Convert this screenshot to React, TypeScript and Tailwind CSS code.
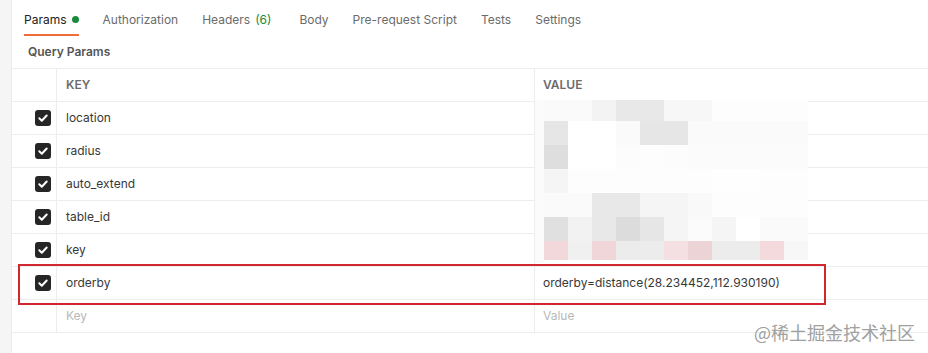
import React from "react";

interface Param {
    key: string;
    value: string;
}

const tabs = ["Params", "Authorization", "Headers", "Body", "Pre-request Script", "Tests", "Settings"];

const params: Param[] = [
    { key: "location", value: "" },
    { key: "radius", value: "" },
    { key: "auto_extend", value: "" },
    { key: "table_id", value: "" },
    { key: "key", value: "" },
    { key: "orderby", value: "orderby=distance(28.234452,112.930190)" },
];

// pixelated (blurred out) values, 11 columns x 7 rows
const mosaic: string[][] = [
    ["#fafafa", "#fafafa", "#f3f3f3", "#e8e8e8", "#e8e8e8", "#f7f7f7", "#f7f7f7", "#fdfdfd", "#fdfdfd", "#fdfdfd", "#fdfdfd"],
    ["#e6e6e6", "#ffffff", "#ffffff", "#fafafa", "#e6e6e6", "#e6e6e6", "#fafafa", "#fafafa", "#fafafa", "#fafafa", "#fafafa"],
    ["#dedede", "#ffffff", "#ffffff", "#fcfcfc", "#fdfdfd", "#fcfcfc", "#fbfbfb", "#fbfbfb", "#fbfbfb", "#fbfbfb", "#fbfbfb"],
    ["#f5f5f5", "#fdfdfd", "#fdfdfd", "#fdfdfd", "#fdfdfd", "#fdfdfd", "#fdfdfd", "#fefefe", "#fefefe", "#fdfdfd", "#fdfdfd"],
    ["#fafafa", "#fafafa", "#e8e8e8", "#e8e8e8", "#f5f5f5", "#f5f5f5", "#f9f9f9", "#fdfdfd", "#fdfdfd", "#fdfdfd", "#fdfdfd"],
    ["#e0e0e0", "#f2f2f2", "#e8e8e8", "#dcdcdc", "#e6e6e6", "#f5f5f5", "#fbfbfb", "#f5f5f5", "#ffffff", "#fafafa", "#fafafa"],
    ["#f2d8da", "#f0f0f0", "#f0d6d8", "#ececec", "#ececec", "#f4e0e2", "#ecd4d6", "#ececec", "#ececec", "#f4dadc", "#f7f7f7"],
];
const mosaicRows = ["h-[21px]", "h-[24px]", "h-[24px]", "h-[24px]", "h-[24px]", "h-[24px]", "h-[19px]"];

const CheckBox: React.FC = () => (
    <div className="w-[16px] h-[16px] rounded-[3px] bg-[#262626] flex items-center justify-center">
        <svg width="12" height="12" viewBox="0 0 12 12" fill="none">
            <path d="M2.3 6.3l2.5 2.4 4.9-5.2" stroke="#ffffff" strokeWidth="2" strokeLinecap="round" strokeLinejoin="round" />
        </svg>
    </div>
);

const App: React.FC = () => {
    return (
        <div
            className="w-[928px] h-[353px] flex bg-white overflow-hidden text-[12px] text-[#383838]"
            style={{ fontFamily: "Inter, 'Noto Sans', sans-serif" }}
        >
            <div className="w-[12px] shrink-0 bg-[#f5f5f5] border-r border-[#ebebeb]" />

            <div className="flex-1 relative">
                {/* tabs */}
                <div className="h-[36px] flex">
                    {tabs.map((tab, i) => (
                        <div
                            key={tab}
                            className={
                                "mx-3 pt-[5px] flex items-center gap-[5px] border-b-2 " +
                                (i === 0 ? "border-[#f06d3c] text-[#212121]" : "border-transparent text-[#6b6b6b]") +
                                (tab === "Headers" ? " mr-[16px]" : "")
                            }
                        >
                            <span>{tab}</span>
                            {tab === "Params" && <span className="w-[7px] h-[7px] rounded-full bg-[#178a3b]" />}
                            {tab === "Headers" && <span className="text-[#178a3b]">(6)</span>}
                        </div>
                    ))}
                </div>

                <div className="h-[32px] flex items-center pl-4 font-semibold text-[#555555]">Query Params</div>

                {/* table */}
                <div className="border-t border-[#ededed]">
                    <div className="h-[33px] grid grid-cols-[45px_478px_1fr] border-b border-[#ededed] font-semibold text-[#6b6b6b]">
                        <div className="border-r border-[#ededed]" />
                        <div className="border-r border-[#ededed] flex items-center pl-[9px]">KEY</div>
                        <div className="flex items-center pl-[8px]">VALUE</div>
                    </div>
                    {params.map(p => (
                        <div key={p.key} className="h-[33px] grid grid-cols-[45px_478px_1fr] border-b border-[#ededed]">
                            <div className="border-r border-[#ededed] flex items-center pl-[23px]">
                                <CheckBox />
                            </div>
                            <div className="border-r border-[#ededed] flex items-center pl-[9px]">{p.key}</div>
                            <div className="flex items-center pl-[8px]">{p.value}</div>
                        </div>
                    ))}
                    <div className="h-[33px] grid grid-cols-[45px_478px_1fr] border-b border-[#ededed] text-[#b8b8b8]">
                        <div className="border-r border-[#ededed]" />
                        <div className="border-r border-[#ededed] flex items-center pl-[9px]">Key</div>
                        <div className="flex items-center pl-[8px]">Value</div>
                    </div>
                </div>

                {/* pixelated values */}
                <div className="absolute left-[523px] top-[100px] w-[273px] pl-[9px] bg-[#fbfbfb]">
                    {mosaic.map((row, r) => (
                        <div key={r} className={"flex " + mosaicRows[r]}>
                            {row.map((c, j) => (
                                <div key={j} className="w-[24px] h-full" style={{ background: c }} />
                            ))}
                        </div>
                    ))}
                    <div className="h-[3px] bg-white" />
                </div>

                {/* highlight */}
                <div className="absolute left-[6px] top-[264px] w-[808px] h-[41px] border-2 border-[#d0282e]" />

                <div
                    className="absolute right-[13px] top-[320px] text-[18px] leading-[24px] text-[#a0a0a0]"
                    style={{ fontFamily: "'Noto Sans CJK SC', sans-serif" }}
                >
                    @稀土掘金技术社区
                </div>
            </div>
        </div>
    );
};

export default App;
